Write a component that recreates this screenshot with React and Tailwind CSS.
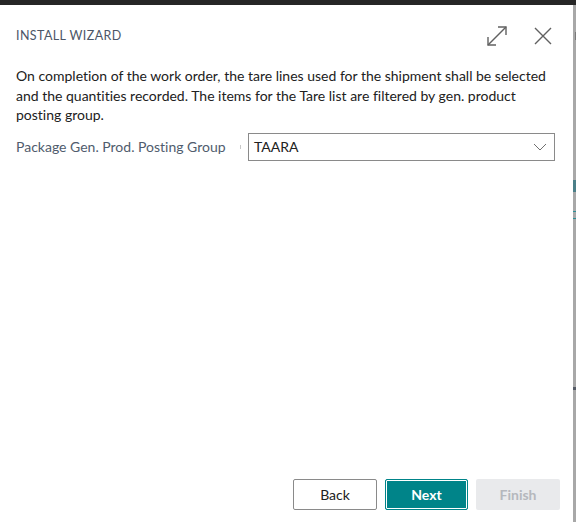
export default function App() {
  return (
    <div className="w-[576px] h-[522px] flex flex-col bg-white overflow-hidden [font-variant-ligatures:none]" style={{ fontFamily: 'Lato, "Open Sans", sans-serif' }}>
      <div className="h-[5px] bg-[#262626] shrink-0" />
      <div className="flex flex-1 min-h-0">
        <div className="flex-1 flex flex-col pl-4 pr-[18px]">
          <div className="flex items-center justify-between h-[58px] pt-[4px]">
            <div className="text-[12.5px] tracking-[0.4px] text-[#4c5667]">INSTALL WIZARD</div>
            <div className="flex items-center gap-[26px] pr-[3px]">
              <svg width="22" height="22" viewBox="0 0 22 22" fill="none" stroke="#616161" strokeWidth="1.4">
                <path d="M2 20 L20 2" />
                <path d="M12 2 H20 V10" />
                <path d="M2 12 V20 H10" />
              </svg>
              <svg width="18" height="18" viewBox="0 0 18 18" fill="none" stroke="#616161" strokeWidth="1.4">
                <path d="M1 1 L17 17 M17 1 L1 17" />
              </svg>
            </div>
          </div>
          <p className="text-[14px] leading-[19.5px] text-[#212121] pr-2 mt-[3px]">
            On completion of the work order, the tare lines used for the shipment shall be selected and the quantities recorded. The items for the Tare list are filtered by gen. product posting group.
          </p>
          <div className="flex items-center mt-[8px]">
            <div className="w-[220px] text-[14px] text-[#505c6d]">Package Gen. Prod. Posting Group</div>
            <div className="w-[8px] flex justify-center"><div className="w-[1px] h-[4px] bg-[#c8c8c8]" /></div>
            <div className="w-[4px]" />
            <div className="flex-1 h-[28px] border border-[#8a8a8a] flex items-center justify-between pl-[5px] pr-[7px] text-[14px] text-[#212121]">
              <span>TAARA</span>
              <svg width="14" height="8" viewBox="0 0 14 8" fill="none" stroke="#707070" strokeWidth="1">
                <path d="M1 1 L7 7 L13 1" />
              </svg>
            </div>
          </div>
          <div className="flex-1" />
          <div className="flex justify-end gap-[8px] pb-[12px] -mr-[5px]">
            <button className="w-[84px] h-[31px] border border-[#8a8a8a] rounded-[2px] bg-white text-[14px] text-[#212121]">Back</button>
            <button className="w-[83px] h-[31px] rounded-[2px] bg-[#008489] border border-[#008489] text-[14px] font-bold text-white shadow-[inset_0_0_0_1px_#ffffff]">Next</button>
            <button className="w-[84px] h-[31px] rounded-[2px] bg-[#e9eaec] text-[14px] font-bold text-[#b5b8bd]">Finish</button>
          </div>
        </div>
        <div className="w-[3px] bg-[#a8a8a8] flex flex-col shrink-0">
          <div className="h-[27px]" />
          <div className="h-[8px] bg-[#7a7a7a] w-[1px] ml-[2px]" />
          <div className="h-[140px]" />
          <div className="h-[12px] bg-[#4b7f88]" />
          <div className="h-[19px]" />
          <div className="h-[1px] bg-[#2f8f96]" />
          <div className="h-[6px]" />
          <div className="h-[1px] bg-[#2f8f96]" />
          <div className="h-[168px]" />
          <div className="h-[3px] bg-[#555b66]" />
        </div>
      </div>
    </div>
  );
}
